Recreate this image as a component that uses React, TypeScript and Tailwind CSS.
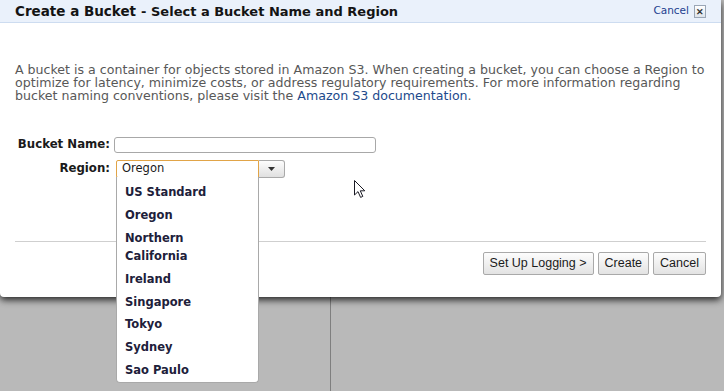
const regiones = [
  ["US Standard"],
  ["Oregon"],
  ["Northern", "California"],
  ["Ireland"],
  ["Singapore"],
  ["Tokyo"],
  ["Sydney"],
  ["Sao Paulo"],
];

const verdana = "font-['DejaVu_Sans',Verdana,sans-serif]";
const arial = "font-['Liberation_Sans',Arial,sans-serif]";

function Boton({ children }: { children: React.ReactNode }) {
  return (
    <button
      type="button"
      className={`${arial} flex h-[23px] items-center rounded-[2px] border border-[#a9a9a9] bg-gradient-to-b from-[#fdfdfd] to-[#e3e3e3] px-[6px] text-[12.5px] text-[#1b1b1b]`}
    >
      {children}
    </button>
  );
}

function Cursor() {
  return (
    <svg
      width="13"
      height="20"
      viewBox="0 0 13 20"
      className="absolute left-[353px] top-[179px]"
    >
      <path
        d="M1.5 1.5 L1.5 16 L5 12.6 L7.6 18.4 L9.8 17.4 L7.3 11.8 L11.8 11.8 Z"
        fill="#fff"
        stroke="#1a1a24"
        strokeWidth="1"
        strokeLinejoin="miter"
      />
    </svg>
  );
}

export default function App() {
  return (
    <div className="relative h-[391px] w-[724px] overflow-hidden bg-[#b9b9b9]">
      {/* pagina de fondo */}
      <div className="flex h-full">
        <div className="h-full w-[331px] border-r border-[#7f7f7f]" />
      </div>

      {/* dialogo */}
      <div className="absolute left-0 top-0 flex h-[297px] w-[721px] flex-col rounded-b-[4px] bg-white shadow-[0_3px_7px_rgba(0,0,0,0.8)]">
        <div className="flex h-[23px] items-center justify-between border-b border-[#cddcf0] bg-[#eaf1fb] pl-[15px] pr-[15px]">
          <div className={`${verdana} flex items-baseline font-bold text-[#141414]`}>
            <span className="text-[13.5px]">Create a Bucket</span>
            <span className="ml-[5px] text-[13px]">- Select a Bucket Name and Region</span>
          </div>
          <div className="flex items-center gap-[5px]">
            <a className={`${verdana} text-[10.5px] text-[#23408f]`}>Cancel</a>
            <span className="flex h-[13px] w-[12px] items-center justify-center border border-[#9aa6b6] bg-gradient-to-b from-[#ffffff] to-[#dde3ea] text-[9px] leading-none font-bold text-[#333]">
              ✕
            </span>
          </div>
        </div>

        <p
          className={`${verdana} mt-[40px] px-[15px] text-[12.6px] leading-[13px] whitespace-nowrap text-[#585858]`}
        >
          A bucket is a container for objects stored in Amazon S3. When creating a bucket, you can choose a Region to
          <br />
          optimize for latency, minimize costs, or address regulatory requirements. For more information regarding
          <br />
          bucket naming conventions, please visit the{" "}
          <a className="text-[#1d4a8c]">Amazon S3 documentation</a>.
        </p>

        <div className={`${verdana} mt-[34px] flex flex-col gap-[6px] text-[11.75px]`}>
          <div className="flex items-center">
            <label className="w-[110px] text-right font-bold text-[#1a1a1a]">Bucket Name:</label>
            <input className="ml-[4px] h-[16px] w-[262px] rounded-[3px] border border-[#a8a8a8] bg-white" />
          </div>
          <div className="flex items-center">
            <label className="w-[110px] text-right font-bold text-[#1a1a1a]">Region:</label>
            <div className="ml-[6px] flex h-[18px]">
              <div className="flex w-[143px] items-center rounded-l-[2px] border border-[#e1a447] pl-[5px] text-[11.5px] text-[#1a1a1a]">
                Oregon
              </div>
              <div className="flex w-[26px] items-center justify-center rounded-r-[3px] border border-l-0 border-[#a9a9a9] bg-gradient-to-b from-[#fdfdfd] to-[#e0e0e0]">
                <svg width="7" height="4" viewBox="0 0 7 4">
                  <path d="M0 0 L7 0 L3.5 4 Z" fill="#333" />
                </svg>
              </div>
            </div>
          </div>
        </div>

        <div className="mx-[15px] mt-[63px] border-t border-[#cfcfcf]" />

        <div className="mt-[10px] flex justify-end gap-[4px] pr-[15px]">
          <Boton>Set Up Logging &gt;</Boton>
          <Boton>Create</Boton>
          <Boton>Cancel</Boton>
        </div>
      </div>

      {/* lista desplegable */}
      <ul
        className={`${verdana} absolute left-[116px] top-[177px] w-[143px] rounded-b-[4px] border border-t-0 border-[#a9a9a9] bg-white pt-[4px] pb-[1px] text-[11.5px] font-bold text-[#20203a]`}
      >
        {regiones.map((lineas) => (
          <li key={lineas.join(" ")} className="py-[2.4px] pl-[8px] leading-[18px]">
            {lineas.map((l) => (
              <div key={l}>{l}</div>
            ))}
          </li>
        ))}
      </ul>

      <Cursor />
    </div>
  );
}
